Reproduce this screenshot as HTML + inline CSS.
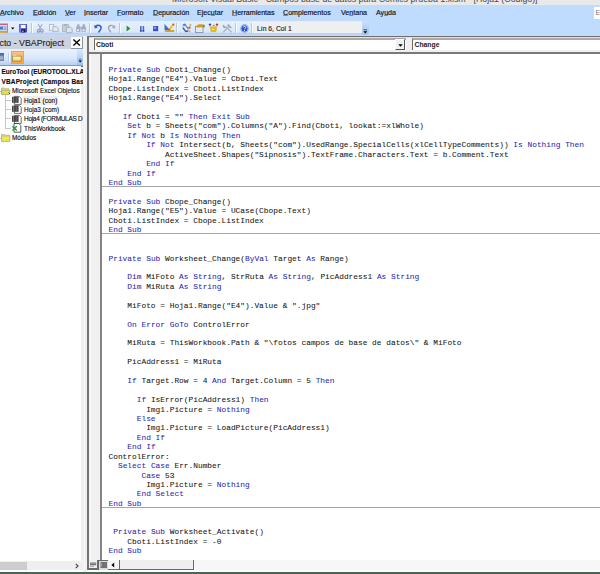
<!DOCTYPE html>
<html><head><meta charset="utf-8">
<style>
*{margin:0;padding:0;box-sizing:border-box}
html,body{width:600px;height:574px;overflow:hidden;background:#f0f0f0;position:relative;font-family:"Liberation Sans",sans-serif}
.a{position:absolute}
svg{position:absolute;overflow:visible}
.t{position:absolute;white-space:pre;line-height:1}
#title{left:0;top:0;width:600px;height:5px;background:#e9e9e9;overflow:hidden}
#menu{left:0;top:5px;width:600px;height:31px;background:#bfdbfe}
.mi{position:absolute;top:5px;font-size:7.1px;color:#101010;white-space:pre;line-height:1;-webkit-text-stroke:0.15px #101010}
.mi u{text-decoration:underline;text-decoration-thickness:0.5px;text-underline-offset:0.3px;text-decoration-color:#8a8a8a}
#tb{left:0;top:21px;width:362px;height:14px;background:linear-gradient(#e4eefc 0,#e6eefb 20%,#dbe7f8 80%,#b9d4f8 86%,#b9d4f8 100%)}
#tbend{left:362px;top:21px;width:7px;height:14px;background:linear-gradient(#cfe0f8,#9fc0ee);border-radius:0 3px 3px 0}
#lin{left:254px;top:22px;width:108px;height:11px;background:#f0efef}
.sp{position:absolute;top:23px;width:2px;height:10px;border-left:1px solid #b4c8e4;border-right:1px solid #f8fbff}
#frame{left:0;top:35px;width:600px;height:1px;background:#7d8896}
/* project panel */
#ptitle{left:0;top:36px;width:87px;height:13px;background:#cad3df}
#pclose{left:71px;top:37px;width:12px;height:12px;background:#fafafa;border-right:1px solid #8c949e;border-bottom:1px solid #8c949e}
#ptb{left:0;top:49px;width:83px;height:16px;background:linear-gradient(#eaf2fd,#d9e7fa 60%,#c0d6f6 88%,#b4cff4)}
#pline{left:0;top:64.5px;width:83px;height:2px;background:linear-gradient(#a8b8cc,#777 50%,#6a6a6a)}
#tree{left:0;top:66px;width:81px;height:495px;background:#fff}
.tr{position:absolute;font-size:6.45px;color:#0a0a0a;white-space:pre;line-height:1;-webkit-text-stroke:0.12px #0a0a0a}
#pscroll{left:0;top:561px;width:82px;height:9px;background:#efefef}
#pthumb{left:0;top:562px;width:27px;height:8px;background:#cdcdcd}
#pwhite{left:0;top:570px;width:87px;height:2px;background:#fdfdfd}
/* code window */
#cwbg{left:83px;top:36px;width:4px;height:536px;background:#f0f0f0}
#cwl{left:87px;top:36px;width:2px;height:535px;background:#747474}
#ws1{left:84px;top:66px;width:1px;height:504px;background:#f8f8f8}
#ws2{left:90px;top:54px;width:1px;height:506px;background:#f9f9f9}
#cwt{left:87px;top:36px;width:513px;height:1px;background:#6e6e6e}
#cwhl{left:89px;top:37px;width:511px;height:1px;background:#e2e2e2}
#combo1{left:94px;top:38px;width:312px;height:12px;background:#fff;border-left:1.5px solid #6a6a6a;border-top:2px solid #a8a8a8}
#dd1{left:395px;top:39px;width:10px;height:11px;background:#f0f0f0;border-right:1px solid #555;border-bottom:1px solid #555;border-left:1px solid #fff;border-top:1px solid #fff}
#combo2{left:412px;top:38px;width:200px;height:12px;background:#fff;border-left:1.5px solid #6a6a6a;border-top:2px solid #a8a8a8}
#hline{left:89px;top:52px;width:511px;height:2px;background:#7a7a7a}
#margin{left:89px;top:54px;width:11px;height:506px;background:#f0f0f0}
#mline{left:100px;top:54px;width:2px;height:506px;background:#858585}
#code{left:102px;top:54px;width:498px;height:506px;background:#fff;overflow:hidden}
.c{position:absolute;left:6.5px;font-family:"Liberation Mono",monospace;font-size:7.855px;color:#141414;white-space:pre;line-height:1;-webkit-text-stroke:0.05px #141414}
.k{color:#2828b0;-webkit-text-stroke:0.05px #2828b0}
.sep{position:absolute;left:0;width:498px;height:1px;background:#a6a6a6}
#hsb{left:89px;top:560px;width:511px;height:10px;background:#f0f0f0}
#hscroll{left:108px;top:560px;width:492px;height:10px;background:#f7f7f7}
#hthumb{left:120px;top:560px;width:74px;height:9px;background:#efefef;border-right:1px solid #6a6a6a}
#hbl{left:88px;top:569px;width:106px;height:1px;background:#6a6a6a}
#taskbar{left:0;top:572px;width:600px;height:2px;background:#4a6552}
#bot{left:87px;top:570px;width:513px;height:2px;background:#fcfcfc}
</style></head><body>
<div id="title" class="a"><div class="t" style="left:172px;top:-5px;font-size:8.8px;color:#4a4a4a">Microsoft Visual Basic - Campos base de datos para Comics prueba 1.xlsm - [Hoja1 (Código)]</div></div>
<div id="menu" class="a">
<span class="mi" style="left:0px"><u>A</u>rchivo</span>
<span class="mi" style="left:33px"><u>E</u>dición</span>
<span class="mi" style="left:65px"><u>V</u>er</span>
<span class="mi" style="left:84px"><u>I</u>nsertar</span>
<span class="mi" style="left:117px"><u>F</u>ormato</span>
<span class="mi" style="left:153px"><u>D</u>epuración</span>
<span class="mi" style="left:197px">Ejec<u>u</u>tar</span>
<span class="mi" style="left:232px"><u>H</u>erramientas</span>
<span class="mi" style="left:283px"><u>C</u>omplementos</span>
<span class="mi" style="left:341px">Ve<u>n</u>tana</span>
<span class="mi" style="left:376px">Ay<u>u</u>da</span>
<div class="a" style="left:594px;top:2px;width:6px;height:12px;background:#fff"></div>
<div class="t" style="left:595.5px;top:4px;font-size:7px;color:#777">E</div>
</div>
<div id="tb" class="a"></div>
<div id="tbend" class="a"></div>
<svg style="left:363px;top:29px" width="5" height="5" viewBox="0 0 5 5"><rect x="0.5" y="0.4" width="3.6" height="0.8" fill="#333"/><path d="M0.4 2.2H4.2L2.3 4.4Z" fill="#000"/></svg>
<div id="lin" class="a"></div>
<div class="t" style="left:257px;top:26px;font-size:6.8px;color:#2e2424;-webkit-text-stroke:0.15px #2e2424">Lín 6, Col 1</div>
<div class="sp" style="left:31px"></div>
<div class="sp" style="left:89px"></div>
<div class="sp" style="left:119px"></div>
<div class="sp" style="left:176px"></div>
<div class="sp" style="left:235px"></div>
<div class="sp" style="left:251px"></div>
<svg style="left:0;top:23px" width="8" height="10" viewBox="0 0 8 10"><rect x="0" y="0.5" width="7.5" height="1.7" fill="#d45a80"/><rect x="0" y="2.2" width="7.5" height="1.3" fill="#f1dde8"/><rect x="0" y="3.5" width="7.5" height="3.3" fill="#3b7ee0"/><rect x="3" y="3.8" width="4" height="2.4" fill="#e6ecf4"/><rect x="3.6" y="4.5" width="2.8" height="1" fill="#707880"/><rect x="0" y="6.8" width="7.5" height="1.2" fill="#d8dce4"/><rect x="0" y="8" width="7.5" height="1.8" fill="#dc9e1c"/><rect x="7" y="0.5" width="0.8" height="9.3" fill="#8a8a9a"/></svg>
<svg style="left:11px;top:27px" width="4" height="3" viewBox="0 0 4 3"><path d="M0 0.5H3.5L1.75 2.6Z" fill="#000"/></svg>
<svg style="left:19px;top:24px" width="8" height="9" viewBox="0 0 8 9"><rect x="0" y="0" width="8" height="8.5" rx="0.6" fill="#4a48c4"/><rect x="0.5" y="0.3" width="1.5" height="8" fill="#7e7ee0"/><rect x="2" y="0.8" width="4.6" height="3.4" fill="#fafafe"/><rect x="2.4" y="5.4" width="3.8" height="3" fill="#14143a"/><rect x="3.3" y="6.6" width="1.2" height="1.3" fill="#e0e0f0"/></svg>
<svg style="left:37px;top:24px" width="7" height="9" viewBox="0 0 7 9"><path d="M1.2 0.2L4.2 5.2M5.2 0.2L2.2 5.2" stroke="#9aa8bc" stroke-width="1.1"/><circle cx="1.7" cy="6.8" r="1.35" fill="none" stroke="#8a9ab2" stroke-width="1.1"/><circle cx="4.9" cy="6.8" r="1.35" fill="none" stroke="#8a9ab2" stroke-width="1.1"/></svg>
<svg style="left:49px;top:24px" width="10" height="8" viewBox="0 0 10 8"><rect x="0.5" y="0.5" width="4.3" height="6" fill="#eef0f4" stroke="#b4bcc8" stroke-width="0.9"/><path d="M3.8 2.7H7.6L9.2 4.3V7.6H3.8Z" fill="#e4e8ee" stroke="#aab4c2" stroke-width="0.9"/></svg>
<svg style="left:62px;top:24px" width="11" height="9" viewBox="0 0 11 9"><rect x="0.4" y="0.8" width="6.3" height="6.8" fill="#c8ced8" stroke="#aab4c2" stroke-width="0.8"/><rect x="2" y="0.2" width="3" height="1.5" fill="#a0aabb"/><path d="M4.3 3.3H8.6L10.2 4.9V8.6H4.3Z" fill="#dfe4ec" stroke="#a4aec0" stroke-width="0.9"/></svg>
<svg style="left:76px;top:24px" width="10" height="8" viewBox="0 0 10 8"><path d="M1.2 0.3H3.4V2.5H4.4V7.7H0.2V2.5H1.2Z" fill="#9eaac0"/><path d="M6.6 0.3H8.8V2.5H9.8V7.7H5.6V2.5H6.6Z" fill="#9eaac0"/><rect x="4.2" y="3" width="1.6" height="2" fill="#a4b0c4"/><rect x="1" y="5.2" width="2" height="1.8" fill="#e8ecf2"/><rect x="6.6" y="5.2" width="2" height="1.8" fill="#e8ecf2"/></svg>
<svg style="left:94px;top:24px" width="8" height="9" viewBox="0 0 8 9"><path d="M0.3 0.8L0.6 4.4L4 3.6Z" fill="#2d5ed8"/><path d="M1.6 2.6C3.6 0.6 7.6 1 7 4.4C6.6 6.4 5 7.2 4.6 8.4" stroke="#2d5ed8" stroke-width="1.5" fill="none"/></svg>
<svg style="left:107px;top:24px" width="9" height="9" viewBox="0 0 9 9"><path d="M8.4 1.2L8.1 4.6L4.8 3.8Z" fill="#9aa8be"/><path d="M7 2.6C5 0.6 1.2 1 1.6 4.4C2 6.4 3.5 7.2 3.9 8.4" stroke="#9aa8be" stroke-width="1.4" fill="none"/></svg>
<svg style="left:126px;top:25px" width="5" height="7" viewBox="0 0 5 7"><path d="M0.6 0.4L4.4 3.4L0.6 6.6Z" fill="#14a014"/></svg>
<svg style="left:140px;top:26px" width="5" height="6" viewBox="0 0 5 6"><rect x="0" y="0" width="1.6" height="5.6" fill="#4e6ed2"/><rect x="2.6" y="0" width="1.6" height="5.6" fill="#4e6ed2"/><rect x="0" y="4" width="1.6" height="1.6" fill="#2a44a8"/><rect x="2.6" y="4" width="1.6" height="1.6" fill="#2a44a8"/></svg>
<svg style="left:153px;top:26px" width="6" height="6" viewBox="0 0 6 6"><rect x="0" y="0" width="5.2" height="5.2" fill="#3554c8"/><rect x="0.6" y="0.6" width="2.4" height="2.4" fill="#7e96e6"/></svg>
<svg style="left:164px;top:23px" width="11" height="10" viewBox="0 0 11 10"><path d="M0.5 1L6 7H0.5Z" fill="#3a6ed8"/><rect x="0.8" y="7" width="9.5" height="2" fill="#e0a020"/><path d="M5 7.2L9.3 1.4" stroke="#e8c030" stroke-width="1.8"/><circle cx="9.4" cy="1.4" r="1" fill="#d04a3a"/><path d="M4.8 7.4L5.6 6" stroke="#303030" stroke-width="0.8"/></svg>
<svg style="left:182px;top:23px" width="10" height="10" viewBox="0 0 10 10"><path d="M0.6 1.2L3.2 0.6L6.6 5.6L4.2 6.4Z" fill="#3c7ee0"/><path d="M0.2 5L3.2 4.2L6.6 8.4L3.6 9.2Z" fill="#3a4e7a"/><path d="M0.6 3.2L3.4 2.4L6.6 7L3.8 7.8Z" fill="#e0e8f4" stroke="#6a86b8" stroke-width="0.5"/><circle cx="8.4" cy="2" r="1.1" fill="#eca830"/><circle cx="7.4" cy="4.6" r="1.2" fill="#e04a30"/><circle cx="7.4" cy="8.4" r="1.1" fill="#eca830"/></svg>
<svg style="left:195px;top:24px" width="10" height="9" viewBox="0 0 10 9"><rect x="0.4" y="2.4" width="7.6" height="6" fill="#e6eaf0" stroke="#7a8ba8" stroke-width="0.8"/><path d="M1.5 1.8C3 0.2 6 0 8.6 0.8L8.4 3.2L1.5 3.6Z" fill="#c8a020"/><rect x="8" y="0.8" width="1.6" height="2.6" fill="#30a040"/></svg>
<svg style="left:208px;top:23px" width="11" height="10" viewBox="0 0 11 10"><circle cx="2" cy="1.6" r="1.2" fill="#3a3ed0"/><path d="M4.6 2.6L6.4 1.4V3.6Z" fill="#30a040"/><circle cx="9" cy="1.6" r="1.2" fill="#d03020"/><path d="M1.4 3.6H9.6L8.8 5.6L8.4 8.6C6.8 9.6 4 9.6 2.6 8.6L2.2 5.6Z" fill="#e2b428"/><rect x="3.6" y="5.6" width="3" height="1.6" fill="#f8e070"/></svg>
<svg style="left:222px;top:24px" width="11" height="9" viewBox="0 0 11 9"><path d="M1.2 8.2L6.8 2.8" stroke="#a8b2c2" stroke-width="1.2"/><path d="M5 1.2L8.6 4.6L9.8 3.4L6.4 0Z" fill="#9aa6b8"/><path d="M9.6 8.2L3.6 2.4" stroke="#a8b2c2" stroke-width="1.2"/><path d="M1.2 0.6A1.9 1.9 0 1 0 4.2 3.4L3.2 2.6L2 1.6Z" fill="#9aa6b8"/></svg>
<svg style="left:240px;top:24px" width="10" height="10" viewBox="0 0 10 10"><circle cx="4.5" cy="4.5" r="4.4" fill="#a4b6d6"/><circle cx="4.5" cy="4.5" r="2.9" fill="#1e50d8"/><path d="M3.2 3.3C3.3 2.2 5.8 2.1 5.8 3.4C5.8 4.2 4.6 4.4 4.5 5.3" stroke="#fff" stroke-width="0.9" fill="none"/><rect x="4" y="5.9" width="1" height="0.9" fill="#fff"/></svg>



<div id="ptitle" class="a"><div class="t" style="left:-0.5px;top:3.2px;font-size:8.8px;color:#222;-webkit-text-stroke:0.1px #222">cto - VBAProject</div></div>
<div id="pclose" class="a"></div>
<svg style="left:73px;top:39px" width="8" height="8" viewBox="0 0 8 8"><path d="M0.4 0.4L6.9 6.4M6.9 0.4L0.4 6.4" stroke="#000" stroke-width="1.35"/></svg>
<div id="ptb" class="a"></div>
<div id="pline" class="a"></div>
<svg style="left:0;top:53px" width="5" height="9" viewBox="0 0 5 9"><rect x="0" y="0" width="4" height="8" fill="#7a8aa4"/><rect x="0" y="0" width="4" height="2.4" fill="#4270c8"/><rect x="0" y="3.6" width="3" height="0.8" fill="#d8dee8"/><rect x="0" y="5.4" width="3" height="0.8" fill="#d8dee8"/></svg>
<div class="a" style="left:8px;top:53px;width:2px;height:9px;border-left:1px solid #b8cce6;border-right:1px solid #fafcff"></div>
<div class="a" style="left:10.5px;top:50.5px;width:13.5px;height:13.5px;background:linear-gradient(#ffc47a,#ffb050 50%,#ffa846);border:1px solid #f6a040"></div>
<svg style="left:12px;top:53px" width="10" height="9" viewBox="0 0 10 9"><defs><linearGradient id="fg" x1="0" y1="0" x2="0" y2="1"><stop offset="0" stop-color="#fffad0"/><stop offset="1" stop-color="#f0d060"/></linearGradient></defs><path d="M0.6 1.2H3.6L4.6 2.2H8.8V8H0.6Z" fill="#f2ead0" stroke="#b0a080" stroke-width="0.5"/><path d="M0.6 3.2H9.2V8.2H0.6Z" fill="url(#fg)" stroke="#7a6a38" stroke-width="0.6"/></svg>
<div class="a" style="left:77px;top:49px;width:6px;height:16px;background:linear-gradient(#dbe9fc,#b4d2f8 60%,#9cc2f2)"></div>
<svg style="left:78px;top:58px" width="5" height="5" viewBox="0 0 5 5"><rect x="0.6" y="0.8" width="3" height="0.7" fill="#555"/><path d="M0.5 2.6H3.9L2.2 4.5Z" fill="#000"/></svg>

<div id="tree" class="a">
<div class="tr" style="left:1.5px;top:3.2px;font-weight:bold">EuroTool (EUROTOOL.XLA</div>
<div class="tr" style="left:1.5px;top:13px;font-weight:bold;letter-spacing:0.18px">VBAProject (Campos Base</div>
<div class="tr" style="left:12px;top:22.2px">Microsoft Excel Objetos</div>
<div class="a" style="left:23px;top:29.5px;width:35px;height:9.5px;background:#efefef"></div>
<div class="tr" style="left:24px;top:32px">Hoja1 (con)</div>
<div class="tr" style="left:24px;top:41.2px">Hoja3 (com)</div>
<div class="tr" style="left:24px;top:50.4px;letter-spacing:-0.27px">Hoja4 (FORMULAS D</div>
<div class="tr" style="left:24px;top:59.6px">ThisWorkbook</div>
<div class="tr" style="left:12px;top:69px">Módulos</div>
<div class="a" style="left:0;top:25px;width:1px;height:1px;background:#bbb"></div>
<svg style="left:1px;top:21px" width="10" height="8" viewBox="0 0 10 8"><path d="M0.5 1H3.2L4 1.8H8V7.4H0.5Z" fill="#e4e060" stroke="#a0a0a0" stroke-width="0.7"/><path d="M0.8 3.4H9.2L8.2 7.4H0.8Z" fill="#e8e430" stroke="#a0a090" stroke-width="0.6"/><path d="M7.8 5.6L9 7" stroke="#333" stroke-width="1"/></svg>
<div class="a" style="left:5px;top:29px;width:1px;height:34px;background:#c8c8c8"></div>
<div class="a" style="left:5px;top:34px;width:6px;height:1px;background:#c8c8c8"></div>
<div class="a" style="left:5px;top:43px;width:6px;height:1px;background:#c8c8c8"></div>
<div class="a" style="left:5px;top:52px;width:6px;height:1px;background:#c8c8c8"></div>
<div class="a" style="left:5px;top:62px;width:6px;height:1px;background:#c8c8c8"></div>
<svg style="left:12px;top:30px" width="10" height="10" viewBox="0 0 10 10"><path d="M2.4 0.4H7.2L9.2 2.4V8.4H2.4Z" fill="#fff" stroke="#4a4a4a" stroke-width="0.8"/><rect x="0" y="0.8" width="6.6" height="6" fill="#474747"/><rect x="1.3" y="0.8" width="0.7" height="6" fill="#8e8e8e"/><rect x="3.9" y="0.8" width="0.6" height="6" fill="#7a7a7a"/></svg>
<svg style="left:12px;top:39px" width="10" height="10" viewBox="0 0 10 10"><path d="M2.4 0.4H7.2L9.2 2.4V8.4H2.4Z" fill="#fff" stroke="#4a4a4a" stroke-width="0.8"/><rect x="0" y="0.8" width="6.6" height="6" fill="#474747"/><rect x="1.3" y="0.8" width="0.7" height="6" fill="#8e8e8e"/><rect x="3.9" y="0.8" width="0.6" height="6" fill="#7a7a7a"/></svg>
<svg style="left:12px;top:49px" width="10" height="10" viewBox="0 0 10 10"><path d="M2.4 0.4H7.2L9.2 2.4V8.4H2.4Z" fill="#fff" stroke="#4a4a4a" stroke-width="0.8"/><rect x="0" y="0.8" width="6.6" height="6" fill="#474747"/><rect x="1.3" y="0.8" width="0.7" height="6" fill="#8e8e8e"/><rect x="3.9" y="0.8" width="0.6" height="6" fill="#7a7a7a"/></svg>
<svg style="left:12px;top:57px" width="10" height="10" viewBox="0 0 10 10"><path d="M2 0.5H6.8L8.8 2.5V9.2H2Z" fill="#fff" stroke="#333" stroke-width="0.8"/><path d="M0.4 3.2L4.8 7.6M4.8 3.2L0.4 7.6" stroke="#2a9a3a" stroke-width="1.4"/></svg>
<div class="a" style="left:0;top:72px;width:1px;height:1px;background:#bbb"></div>
<svg style="left:1px;top:67px" width="10" height="9" viewBox="0 0 10 9"><path d="M0.6 1.4H3.6L4.4 2.2H8.8V8.2H0.6Z" fill="#e8e458" stroke="#a8a8a8" stroke-width="0.7"/><rect x="0.6" y="3" width="8.2" height="5.2" fill="#ecea50" stroke="#a8a8a8" stroke-width="0.6"/></svg>

</div>
<div id="pscroll" class="a"></div>
<div id="pthumb" class="a"></div>
<svg style="left:75px;top:563px" width="4" height="6" viewBox="0 0 4 6"><path d="M0.8 0.8L3 3L0.8 5.2" stroke="#444" stroke-width="1.1" fill="none"/></svg>
<div id="pwhite" class="a"></div>

<div id="cwbg" class="a"></div>
<div id="cwl" class="a"></div>
<div id="ws1" class="a"></div>
<div id="cwt" class="a"></div>
<div id="cwhl" class="a"></div>
<div id="combo1" class="a"></div>
<div id="dd1" class="a"></div>
<svg style="left:398px;top:44px" width="5" height="3" viewBox="0 0 5 3"><path d="M0.3 0.2H4.7L2.5 2.7Z" fill="#000"/></svg>
<div id="combo2" class="a"></div>
<div class="t" style="left:96px;top:42px;font-size:6.8px;font-weight:bold;color:#1a1a2a">Cboti</div>
<div class="t" style="left:414.5px;top:42px;font-size:6.8px;font-weight:bold;color:#1a1a2a">Change</div>
<div id="hline" class="a"></div>
<div id="margin" class="a"></div>
<div id="mline" class="a"></div>
<div id="ws2" class="a"></div>
<div id="code" class="a">
<div class="c" style="top:11.78px"><span class="k">Private</span> <span class="k">Sub</span> Cboti_Change()</div>
<div class="c" style="top:21.22px">Hoja1.Range(&quot;E4&quot;).Value = Cboti.Text</div>
<div class="c" style="top:30.66px">Cbope.ListIndex = Cboti.ListIndex</div>
<div class="c" style="top:40.09px">Hoja1.Range(&quot;E4&quot;).Select</div>
<div class="c" style="top:58.97px">   <span class="k">If</span> Cboti = &quot;&quot; <span class="k">Then</span> <span class="k">Exit</span> <span class="k">Sub</span></div>
<div class="c" style="top:68.41px">    <span class="k">Set</span> b = Sheets(&quot;com&quot;).Columns(&quot;A&quot;).Find(Cboti, lookat:=xlWhole)</div>
<div class="c" style="top:77.85px">    <span class="k">If</span> <span class="k">Not</span> b <span class="k">Is</span> <span class="k">Nothing</span> <span class="k">Then</span></div>
<div class="c" style="top:87.28px">        <span class="k">If</span> <span class="k">Not</span> Intersect(b, Sheets(&quot;com&quot;).UsedRange.SpecialCells(xlCellTypeComments)) <span class="k">Is</span> <span class="k">Nothing</span> <span class="k">Then</span></div>
<div class="c" style="top:96.72px">            ActiveSheet.Shapes(&quot;Sipnosis&quot;).TextFrame.Characters.Text = b.Comment.Text</div>
<div class="c" style="top:106.16px">        <span class="k">End</span> <span class="k">If</span></div>
<div class="c" style="top:115.60px">    <span class="k">End</span> <span class="k">If</span></div>
<div class="c" style="top:125.04px"><span class="k">End</span> <span class="k">Sub</span></div>
<div class="c" style="top:143.91px"><span class="k">Private</span> <span class="k">Sub</span> Cbope_Change()</div>
<div class="c" style="top:153.35px">Hoja1.Range(&quot;E5&quot;).Value = UCase(Cbope.Text)</div>
<div class="c" style="top:162.79px">Cboti.ListIndex = Cbope.ListIndex</div>
<div class="c" style="top:172.23px"><span class="k">End</span> <span class="k">Sub</span></div>
<div class="c" style="top:200.54px"><span class="k">Private</span> <span class="k">Sub</span> Worksheet_Change(<span class="k">ByVal</span> Target <span class="k">As</span> Range)</div>
<div class="c" style="top:219.42px">    <span class="k">Dim</span> MiFoto <span class="k">As</span> <span class="k">String</span>, StrRuta <span class="k">As</span> <span class="k">String</span>, PicAddress1 <span class="k">As</span> <span class="k">String</span></div>
<div class="c" style="top:228.85px">    <span class="k">Dim</span> MiRuta <span class="k">As</span> <span class="k">String</span></div>
<div class="c" style="top:247.73px">    MiFoto = Hoja1.Range(&quot;E4&quot;).Value &amp; &quot;.jpg&quot;</div>
<div class="c" style="top:266.61px">    <span class="k">On</span> <span class="k">Error</span> <span class="k">GoTo</span> ControlError</div>
<div class="c" style="top:285.48px">    MiRuta = ThisWorkbook.Path &amp; &quot;\fotos campos de base de datos\&quot; &amp; MiFoto</div>
<div class="c" style="top:304.36px">    PicAddress1 = MiRuta</div>
<div class="c" style="top:323.23px">    <span class="k">If</span> Target.Row = 4 <span class="k">And</span> Target.Column = 5 <span class="k">Then</span></div>
<div class="c" style="top:342.11px">      <span class="k">If</span> IsError(PicAddress1) <span class="k">Then</span></div>
<div class="c" style="top:351.55px">        Img1.Picture = <span class="k">Nothing</span></div>
<div class="c" style="top:360.99px">      <span class="k">Else</span></div>
<div class="c" style="top:370.42px">        Img1.Picture = LoadPicture(PicAddress1)</div>
<div class="c" style="top:379.86px">      <span class="k">End</span> <span class="k">If</span></div>
<div class="c" style="top:389.30px">    <span class="k">End</span> <span class="k">If</span></div>
<div class="c" style="top:398.74px">ControlError:</div>
<div class="c" style="top:408.18px">  <span class="k">Select</span> <span class="k">Case</span> Err.Number</div>
<div class="c" style="top:417.61px">       <span class="k">Case</span> 53</div>
<div class="c" style="top:427.05px">        Img1.Picture = <span class="k">Nothing</span></div>
<div class="c" style="top:436.49px">      <span class="k">End</span> <span class="k">Select</span></div>
<div class="c" style="top:445.93px"><span class="k">End</span> <span class="k">Sub</span></div>
<div class="c" style="top:474.24px"> <span class="k">Private</span> <span class="k">Sub</span> Worksheet_Activate()</div>
<div class="c" style="top:483.68px">    Cboti.ListIndex = -0</div>
<div class="c" style="top:493.12px"><span class="k">End</span> <span class="k">Sub</span></div>
<div class="sep" style="top:132px"></div>
<div class="sep" style="top:179px"></div>
<div class="sep" style="top:453px"></div>
</div>
<div id="hsb" class="a"></div>
<div id="hscroll" class="a"></div>
<div id="hthumb" class="a"></div>
<div id="hbl" class="a"></div>
<div class="a" style="left:89px;top:560px;width:9px;height:9px;background:#f0f0f0;border-right:1px solid #6a6a6a;border-bottom:1px solid #6a6a6a"></div>
<svg style="left:90px;top:562px" width="7" height="6" viewBox="0 0 7 6"><rect x="0" y="0.6" width="6.2" height="1" fill="#555"/><rect x="0" y="2.2" width="6.2" height="1" fill="#555"/><rect x="0" y="3.8" width="4" height="0.8" fill="#888"/></svg>
<div class="a" style="left:98px;top:560px;width:10px;height:10px;background:#dcdcdc;border-left:1px solid #6a6a6a;border-top:1px solid #6a6a6a"></div>
<svg style="left:100px;top:562px" width="8" height="7" viewBox="0 0 8 7"><rect x="0.5" y="0.2" width="6.5" height="5.6" fill="#5a5a5a"/><rect x="0.5" y="1.6" width="2" height="0.9" fill="#d8d8d8"/><rect x="0.5" y="3.4" width="2" height="0.9" fill="#d8d8d8"/><rect x="3.2" y="1.4" width="3.8" height="1.1" fill="#888"/><rect x="3.2" y="3.4" width="3.8" height="1.1" fill="#888"/></svg>
<div class="a" style="left:108px;top:560px;width:12px;height:9px;background:#f6f6f6;border-right:1px solid #6a6a6a"></div>
<svg style="left:111px;top:562px" width="4" height="6" viewBox="0 0 4 6"><path d="M3.2 0.4V5.4L0.4 2.9Z" fill="#000"/></svg>

<div id="bot" class="a"></div>
<div id="taskbar" class="a"></div>
</body></html>
